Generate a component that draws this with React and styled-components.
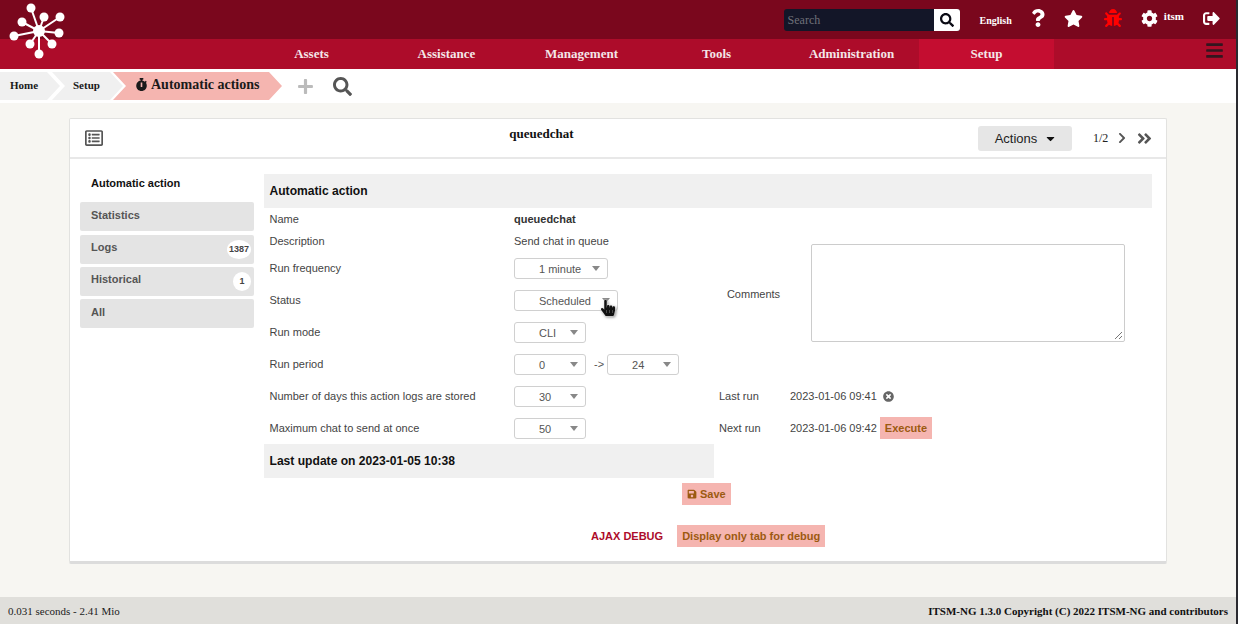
import React from "react";
import styled, { createGlobalStyle } from "styled-components";
import {
  FaQuestion,
  FaStar,
  FaBug,
  FaCog,
  FaSignOutAlt,
  FaSearch,
  FaPlus,
  FaStopwatch,
  FaChevronRight,
  FaAngleDoubleRight,
  FaBars,
  FaRegListAlt,
  FaTimesCircle,
  FaSave,
  FaCaretDown,
  FaHandPointer,
} from "react-icons/fa";

const GlobalStyle = createGlobalStyle`
  html, body { margin: 0; padding: 0; background: #2a2a30; }
  body { font-family: "Liberation Sans", Arial, sans-serif; font-size: 11px; color: #444; }
  * { box-sizing: border-box; }
`;

const Page = styled.div`
  width: 1236px;
  height: 624px;
  display: flex;
  flex-direction: column;
  background: #f7f6f2;
  position: relative;
  overflow: hidden;
`;

const TopBar = styled.header`
  height: 39px;
  background: #7a071d;
  display: flex;
  align-items: center;
  justify-content: flex-end;
  font-family: "Liberation Serif", serif;
  font-weight: bold;
  color: #fff;
`;

const SearchBox = styled.div`
  display: flex;
  width: 176px;
  height: 22px;
  margin-right: 20px;
  margin-top: 1px;
  border-radius: 3px;
  overflow: hidden;
  background: #131628;
`;

const SearchText = styled.span`
  flex: 1;
  padding-left: 4px;
  font-weight: normal;
  font-size: 12px;
  line-height: 23px;
  color: #6f7078;
`;

const SearchButton = styled.span`
  width: 26px;
  background: #fff;
  color: #0a0a14;
  display: flex;
  align-items: center;
  justify-content: center;
  font-size: 14px;
`;

const Lang = styled.span`
  font-size: 10px;
  margin-right: 17px;
  margin-top: 1px;
`;

const TopIcon = styled.span`
  display: flex;
  font-size: ${(p) => p.$size}px;
  color: ${(p) => p.$color || "#fff"};
  margin-right: ${(p) => p.$gap}px;
  margin-top: -3px;
`;

const UserName = styled.span`
  font-size: 11px;
  margin-right: 19px;
  margin-top: -8px;
  margin-left: -18px;
`;

const NavBar = styled.nav`
  height: 30px;
  background: #ad0c2a;
  display: flex;
  padding-left: 244px;
  font-family: "Liberation Serif", serif;
  font-weight: bold;
  font-size: 13px;
  color: #f4e6e8;
  position: relative;
`;

const NavItem = styled.a`
  width: 135px;
  display: flex;
  align-items: center;
  justify-content: center;
  background: ${(p) => (p.$active ? "#c40d30" : "transparent")};
`;

const Burger = styled.span`
  position: absolute;
  right: 12px;
  top: 2px;
  color: #33161f;
  font-size: 19px;
  display: flex;
`;

const LogoMark = styled.svg`
  position: absolute;
  left: 0;
  top: 0;
  width: 70px;
  height: 70px;
`;

const CrumbBar = styled.div`
  height: 34px;
  background: #fff;
  display: flex;
  align-items: center;
  font-family: "Liberation Serif", serif;
  font-weight: bold;
  color: #1a1a1a;
`;

const Crumb = styled.a`
  height: 28px;
  width: ${(p) => p.$w}px;
  margin-left: ${(p) => p.$ml || 0}px;
  display: flex;
  align-items: center;
  gap: 3px;
  padding: 0 0 3px ${(p) => p.$pl}px;
  font-size: ${(p) => p.$fs}px;
  background: ${(p) => (p.$current ? "#f5b5b0" : "#f0f0f0")};
  clip-path: polygon(
    ${(p) => (p.$first ? "0 0" : "0 0, 13px 50%, 0 100%")},
    ${(p) => (p.$first ? "0 100%, " : "")}calc(100% - 13px) 100%,
    100% 50%,
    calc(100% - 13px) 0
  );
`;

const CrumbAction = styled.span`
  display: flex;
  font-size: ${(p) => p.$size}px;
  color: ${(p) => p.$color};
  margin-left: ${(p) => p.$ml}px;
`;

const Main = styled.main`
  flex: 1;
  padding: 15px 69px 0;
`;

const Card = styled.section`
  width: 1098px;
  height: 446px;
  background: #fff;
  border: 1px solid #e2e2e0;
  border-bottom: 3px solid #dcdcdc;
  border-radius: 2px;
`;

const CardHead = styled.div`
  height: 40px;
  border-bottom: 2px solid #e8e8e8;
  display: grid;
  grid-template-columns: 893px 94px 1fr;
  align-items: center;
  padding-left: 15px;
  position: relative;
`;

const ListIcon = styled.span`
  display: flex;
  font-size: 18px;
  color: #555;
`;

const CardTitle = styled.h2`
  position: absolute;
  left: 0;
  right: 0;
  top: 7px;
  margin: 0;
  padding-right: 153px;
  text-align: center;
  font-family: "Liberation Serif", serif;
  font-weight: bold;
  font-size: 13px;
  color: #111;
`;

const ActionsButton = styled.button`
  height: 25px;
  width: 94px;
  grid-column: 2;
  border: 0;
  border-radius: 3px;
  padding: 0 0 0 2px;
  background: #e6e6e6;
  font-family: "Liberation Sans", sans-serif;
  font-size: 13px;
  color: #222;
  display: flex;
  align-items: center;
  justify-content: center;
  gap: 7px;
`;

const Pager = styled.div`
  display: flex;
  align-items: center;
  padding-left: 21px;
  font-family: "Liberation Serif", serif;
  font-size: 12px;
  color: #222;
`;

const PagerIcon = styled.span`
  display: flex;
  font-size: ${(p) => p.$size}px;
  color: #555;
  margin-left: ${(p) => p.$ml}px;
`;

const CardBody = styled.div`
  display: grid;
  grid-template-columns: 174px 1fr;
  column-gap: 10px;
  padding: 15px 14px 0 10px;
`;

const Tabs = styled.ul`
  list-style: none;
  margin: 0;
  padding: 0;
  display: flex;
  flex-direction: column;
  gap: 3px;
  font-weight: bold;
`;

const Tab = styled.li`
  height: ${(p) => (p.$active ? "25px" : "29px")};
  margin-bottom: ${(p) => p.$mb || 0}px;
  padding: ${(p) => p.$pt ?? 7}px 11px 0;
  background: ${(p) => (p.$active ? "#fff" : "#e4e4e4")};
  color: ${(p) => (p.$active ? "#111" : "#555")};
  border-radius: 2px;
  position: relative;
`;

const Count = styled.span`
  position: absolute;
  right: 3px;
  top: 5px;
  min-width: 18px;
  height: 19px;
  padding: 0 2px;
  border-radius: 50%;
  background: #fff;
  font-size: 9px;
  line-height: 18px;
  text-align: center;
  color: #444;
`;

const Form = styled.div`
  display: grid;
  grid-template-columns: 250px 200px 76px 1fr;
  grid-template-rows: 34px 22px 22px repeat(6, 32px) 34px auto;
  align-items: center;
`;

const Band = styled.div`
  grid-column: ${(p) => p.$span};
  grid-row: ${(p) => p.$row};
  align-self: stretch;
  background: #f0f0f0;
  padding-left: 5.5px;
  display: flex;
  align-items: center;
  font-size: 12.1px;
  font-weight: bold;
  color: #111;
`;

const Label = styled.div`
  grid-column: 1;
  grid-row: ${(p) => p.$row};
  padding-left: 5.5px;
`;

const Value = styled.div`
  grid-column: 2 / span 2;
  grid-row: ${(p) => p.$row};
  font-weight: ${(p) => (p.$bold ? "bold" : "normal")};
  color: ${(p) => (p.$bold ? "#333" : "#444")};
  display: flex;
  align-items: center;
`;

const SideLabel = styled.div`
  grid-column: 3;
  grid-row: ${(p) => p.$row};
  padding-left: 5px;
`;

const SideValue = styled.div`
  grid-column: 4;
  grid-row: ${(p) => p.$row};
  display: flex;
  align-items: center;
  gap: 3px;
`;

const CommentLabel = styled.div`
  grid-column: 3;
  grid-row: 3 / span 4;
  text-align: center;
  padding: 10px 0 0 3px;
`;

const CommentBox = styled.div`
  grid-column: 4;
  grid-row: 3 / span 4;
  width: 314px;
  height: 98px;
  margin: 8px 0 0 21px;
  border: 1px solid #ccc;
  border-radius: 2px;
  background: #fff;
  position: relative;
`;

const ResizeGrip = styled.svg`
  position: absolute;
  right: 1px;
  bottom: 1px;
  width: 9px;
  height: 9px;
`;

const Select = styled.div`
  width: ${(p) => p.$w}px;
  height: 21px;
  border: 1px solid #d0d0d0;
  border-radius: 3px;
  background: #fff;
  color: #555;
  display: flex;
  align-items: center;
  padding: 0 7px 0 24px;
  position: relative;
`;

const SelectText = styled.span`
  flex: 1;
  padding-top: 1px;
`;

const Arrow = styled.span`
  width: 0;
  height: 0;
  border-left: 4px solid transparent;
  border-right: 4px solid transparent;
  border-top: 5px solid #888;
`;

const Cursor = styled.span`
  position: absolute;
  right: 1px;
  top: 9px;
  display: flex;
  font-size: 16px;
  color: #111;
  filter: drop-shadow(0 0 1px #fff) drop-shadow(1px 1px 1px #888);
`;

const Sep = styled.span`
  margin: 0 3px 0 8px;
  color: #555;
`;

const ClearIcon = styled(FaTimesCircle)`
  margin-left: 3px;
  font-size: 11px;
  color: #666;
`;

const SalmonButton = styled.button`
  height: 22px;
  padding: 0 5px;
  border: 0;
  background: #f5b5b0;
  font-family: "Liberation Sans", sans-serif;
  font-weight: bold;
  font-size: 11px;
  color: #9c5a10;
  display: inline-flex;
  align-items: center;
  gap: 3px;
`;

const SaveRow = styled.div`
  grid-column: 1 / -1;
  grid-row: 11;
  display: flex;
  padding-left: 418px;
  margin-top: 5px;
`;

const DebugRow = styled.div`
  display: flex;
  align-items: center;
  padding-left: 521px;
  margin-top: 20px;
  gap: 14px;
  font-weight: bold;
  color: #ad0c2a;
`;

const Footer = styled.footer`
  height: 27px;
  background: #e0dfdb;
  display: flex;
  align-items: center;
  justify-content: space-between;
  padding: 0 8px;
  font-family: "Liberation Serif", serif;
  font-size: 11px;
  color: #222;
`;

const Copyright = styled.span`
  font-weight: bold;
  color: #111;
`;

const spokes = [
  [31, 8],
  [44, 17],
  [60, 17],
  [59, 33],
  [52, 44],
  [39, 54],
  [30, 44],
  [14, 36],
  [22, 22],
];

function Logo() {
  return (
    <LogoMark viewBox="0 0 70 70">
      {spokes.map(([x, y]) => (
        <g key={`${x}-${y}`}>
          <line x1="39" y1="31" x2={x} y2={y} stroke="#fff" strokeWidth="2" />
          <circle cx={x} cy={y} r="4.5" fill="#fff" />
        </g>
      ))}
      <circle cx="39" cy="31" r="6" fill="#fff" />
    </LogoMark>
  );
}

const App = () => {
  return (
    <>
      <GlobalStyle />
      <Page>
        <TopBar>
          <SearchBox>
            <SearchText>Search</SearchText>
            <SearchButton>
              <FaSearch />
            </SearchButton>
          </SearchBox>
          <Lang>English</Lang>
          <TopIcon $size={18} $gap={17}>
            <FaQuestion />
          </TopIcon>
          <TopIcon $size={19} $gap={21}>
            <FaStar />
          </TopIcon>
          <TopIcon $size={18} $gap={19} $color="#f00">
            <FaBug />
          </TopIcon>
          <TopIcon $size={17} $gap={24}>
            <FaCog />
          </TopIcon>
          <UserName>itsm</UserName>
          <TopIcon $size={17} $gap={16}>
            <FaSignOutAlt />
          </TopIcon>
        </TopBar>
        <NavBar>
          <NavItem>Assets</NavItem>
          <NavItem>Assistance</NavItem>
          <NavItem>Management</NavItem>
          <NavItem>Tools</NavItem>
          <NavItem>Administration</NavItem>
          <NavItem $active>Setup</NavItem>
          <Burger>
            <FaBars />
          </Burger>
        </NavBar>
        <Logo />
        <CrumbBar>
          <Crumb $first $w={60} $pl={10} $fs={11}>
            Home
          </Crumb>
          <Crumb $w={71} $ml={-8} $pl={21} $fs={11}>
            Setup
          </Crumb>
          <Crumb $current $w={169} $ml={-10} $pl={22} $fs={14}>
            <FaStopwatch size={13} />
            Automatic actions
          </Crumb>
          <CrumbAction $size={17} $color="#bbb" $ml={15}>
            <FaPlus />
          </CrumbAction>
          <CrumbAction $size={19} $color="#555" $ml={19}>
            <FaSearch />
          </CrumbAction>
        </CrumbBar>
        <Main>
          <Card>
            <CardHead>
              <ListIcon>
                <FaRegListAlt />
              </ListIcon>
              <CardTitle>queuedchat</CardTitle>
              <ActionsButton>
                Actions <FaCaretDown size={13} color="#111" />
              </ActionsButton>
              <Pager>
                1/2
                <PagerIcon $size={12} $ml={8}>
                  <FaChevronRight />
                </PagerIcon>
                <PagerIcon $size={17} $ml={8}>
                  <FaAngleDoubleRight />
                </PagerIcon>
              </Pager>
            </CardHead>
            <CardBody>
              <Tabs>
                <Tab $active $pt={3}>
                  Automatic action
                </Tab>
                <Tab $mb={1}>Statistics</Tab>
                <Tab $pt={6}>
                  Logs<Count>1387</Count>
                </Tab>
                <Tab $pt={6}>
                  Historical<Count>1</Count>
                </Tab>
                <Tab>All</Tab>
              </Tabs>
              <Form>
                <Band $span="1 / -1" $row={1}>
                  Automatic action
                </Band>

                <Label $row={2}>Name</Label>
                <Value $row={2} $bold>
                  queuedchat
                </Value>

                <Label $row={3}>Description</Label>
                <Value $row={3}>Send chat in queue</Value>

                <CommentLabel>Comments</CommentLabel>
                <CommentBox>
                  <ResizeGrip viewBox="0 0 9 9">
                    <path d="M8 1 L1 8 M8 5 L5 8" stroke="#777" strokeWidth="1" />
                  </ResizeGrip>
                </CommentBox>

                <Label $row={4}>Run frequency</Label>
                <Value $row={4}>
                  <Select $w={94}>
                    <SelectText>1 minute</SelectText>
                    <Arrow />
                  </Select>
                </Value>

                <Label $row={5}>Status</Label>
                <Value $row={5}>
                  <Select $w={104}>
                    <SelectText>Scheduled</SelectText>
                    <Arrow />
                    <Cursor>
                      <FaHandPointer />
                    </Cursor>
                  </Select>
                </Value>

                <Label $row={6}>Run mode</Label>
                <Value $row={6}>
                  <Select $w={72}>
                    <SelectText>CLI</SelectText>
                    <Arrow />
                  </Select>
                </Value>

                <Label $row={7}>Run period</Label>
                <Value $row={7}>
                  <Select $w={72}>
                    <SelectText>0</SelectText>
                    <Arrow />
                  </Select>
                  <Sep>-&gt;</Sep>
                  <Select $w={72}>
                    <SelectText>24</SelectText>
                    <Arrow />
                  </Select>
                </Value>

                <Label $row={8}>Number of days this action logs are stored</Label>
                <Value $row={8}>
                  <Select $w={72}>
                    <SelectText>30</SelectText>
                    <Arrow />
                  </Select>
                </Value>
                <SideLabel $row={8}>Last run</SideLabel>
                <SideValue $row={8}>
                  2023-01-06 09:41 <ClearIcon />
                </SideValue>

                <Label $row={9}>Maximum chat to send at once</Label>
                <Value $row={9}>
                  <Select $w={72}>
                    <SelectText>50</SelectText>
                    <Arrow />
                  </Select>
                </Value>
                <SideLabel $row={9}>Next run</SideLabel>
                <SideValue $row={9}>
                  2023-01-06 09:42 <SalmonButton>Execute</SalmonButton>
                </SideValue>

                <Band $span="1 / span 2" $row={10}>
                  Last update on 2023-01-05 10:38
                </Band>

                <SaveRow>
                  <SalmonButton>
                    <FaSave size={10} /> Save
                  </SalmonButton>
                </SaveRow>
              </Form>
            </CardBody>
            <DebugRow>
              AJAX DEBUG
              <SalmonButton>Display only tab for debug</SalmonButton>
            </DebugRow>
          </Card>
        </Main>
        <Footer>
          <span>0.031 seconds - 2.41 Mio</span>
          <Copyright>ITSM-NG 1.3.0 Copyright (C) 2022 ITSM-NG and contributors</Copyright>
        </Footer>
      </Page>
    </>
  );
};

export default App;
